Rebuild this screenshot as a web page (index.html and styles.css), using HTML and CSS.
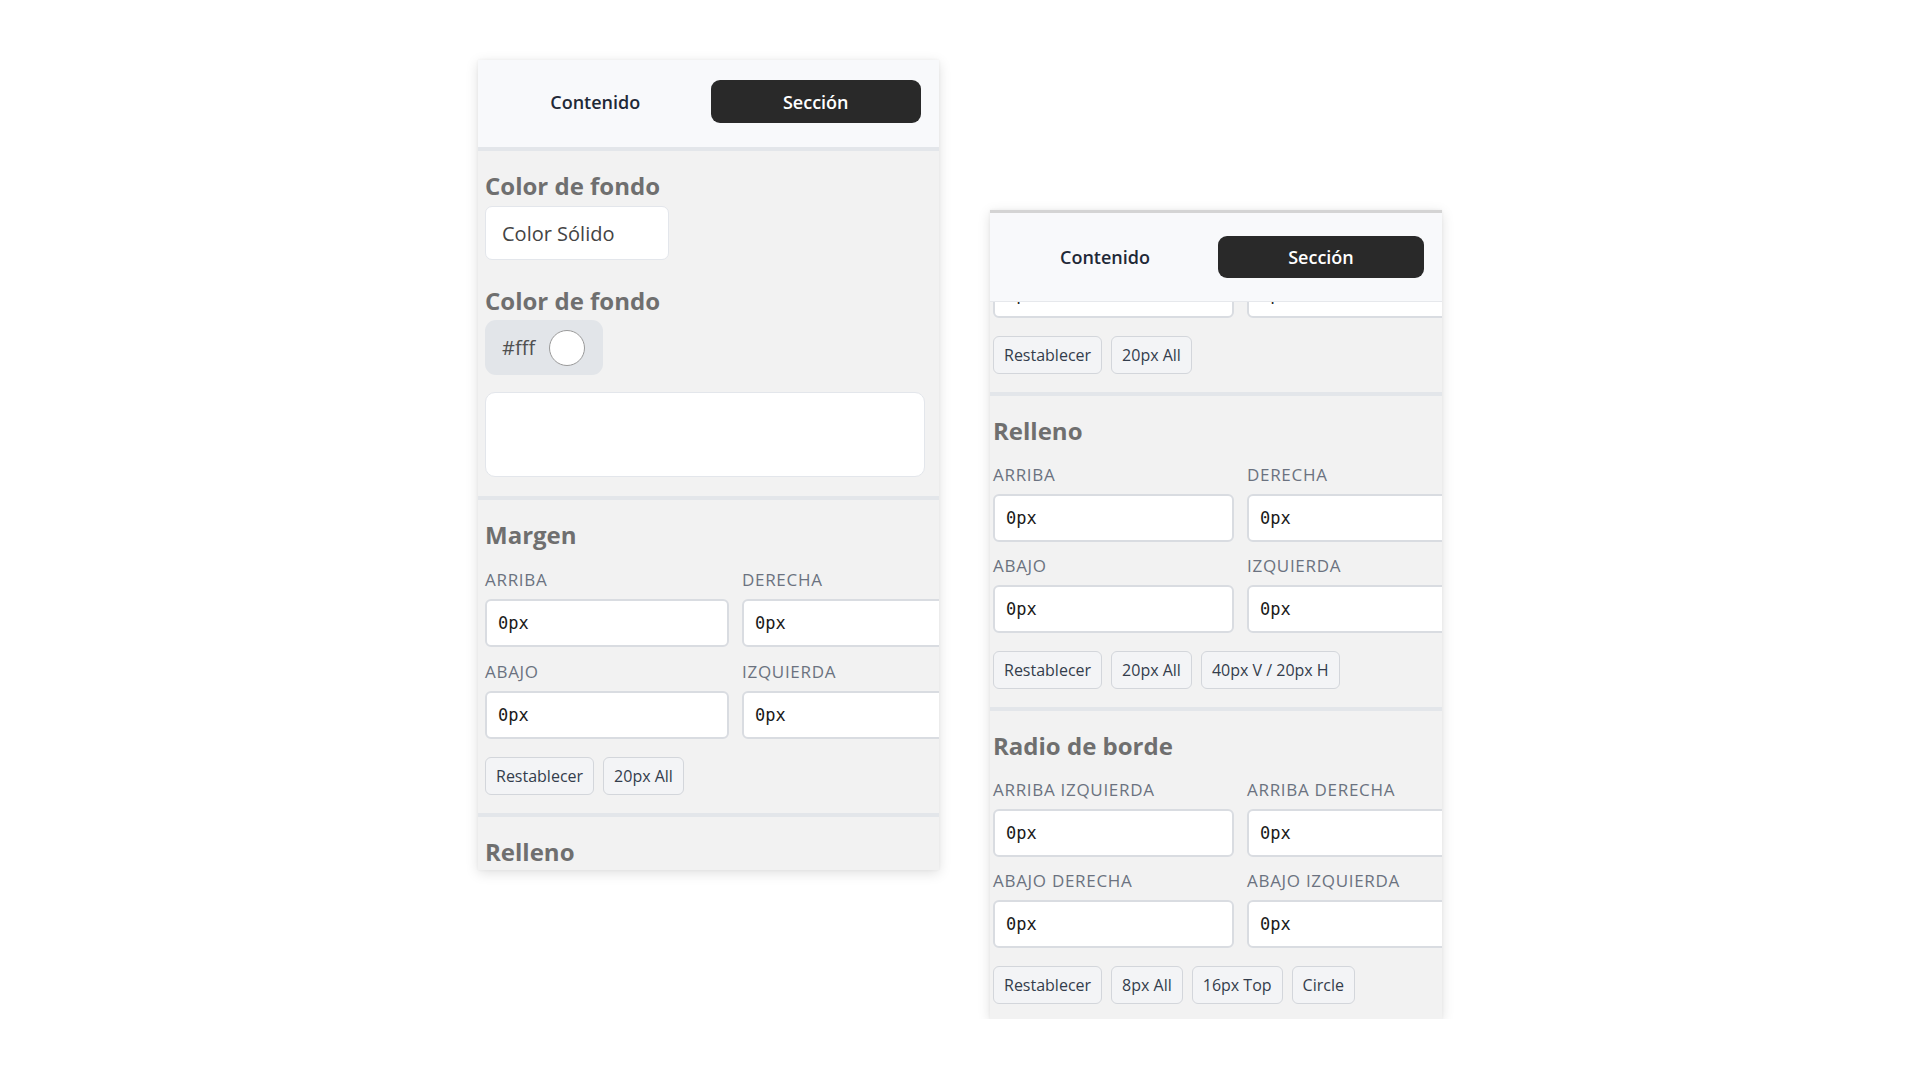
FILE: index.html
```html
<!DOCTYPE html>
<html lang="es">
<head>
<meta charset="utf-8">
<title>Editor de sección</title>
<link rel="stylesheet" href="styles.css">
</head>
<body>
<div class="stage">
  <div class="panel panel--a">
    <div class="tabs">
      <button class="tab">Contenido</button>
      <button class="tab tab--active">Sección</button>
    </div>
    <div class="body">
      <section class="section">
        <h3 class="section-title">Color de fondo</h3>
        <div class="select-box">Color Sólido</div>
        <h3 class="section-title section-title--spaced">Color de fondo</h3>
        <div class="color-chip"><span class="chip-text">#fff</span><span class="swatch"></span></div>
        <div class="preview-box"></div>
      </section>
      <section class="section">
        <h3 class="section-title">Margen</h3>
        <div class="grid">
          <div class="field"><label class="field-label">Arriba</label><div class="input">0px</div></div>
          <div class="field"><label class="field-label">Derecha</label><div class="input">0px</div></div>
          <div class="field"><label class="field-label">Abajo</label><div class="input">0px</div></div>
          <div class="field"><label class="field-label">Izquierda</label><div class="input">0px</div></div>
        </div>
        <div class="btn-row">
          <button class="btn">Restablecer</button>
          <button class="btn">20px All</button>
        </div>
      </section>
      <section class="section">
        <h3 class="section-title">Relleno</h3>
      </section>
    </div>
  </div>

  <div class="panel panel--b">
    <div class="tabs">
      <button class="tab">Contenido</button>
      <button class="tab tab--active">Sección</button>
    </div>
    <div class="body">
      <div class="scroll-content">
        <section class="section section--cut">
          <div class="grid grid--cut">
            <div class="input">0px</div>
            <div class="input">0px</div>
          </div>
          <div class="btn-row">
            <button class="btn">Restablecer</button>
            <button class="btn">20px All</button>
          </div>
        </section>
        <section class="section">
          <h3 class="section-title">Relleno</h3>
          <div class="grid">
            <div class="field"><label class="field-label">Arriba</label><div class="input">0px</div></div>
            <div class="field"><label class="field-label">Derecha</label><div class="input">0px</div></div>
            <div class="field"><label class="field-label">Abajo</label><div class="input">0px</div></div>
            <div class="field"><label class="field-label">Izquierda</label><div class="input">0px</div></div>
          </div>
          <div class="btn-row">
            <button class="btn">Restablecer</button>
            <button class="btn">20px All</button>
            <button class="btn">40px V / 20px H</button>
          </div>
        </section>
        <section class="section">
          <h3 class="section-title">Radio de borde</h3>
          <div class="grid">
            <div class="field"><label class="field-label">Arriba izquierda</label><div class="input">0px</div></div>
            <div class="field"><label class="field-label">Arriba derecha</label><div class="input">0px</div></div>
            <div class="field"><label class="field-label">Abajo derecha</label><div class="input">0px</div></div>
            <div class="field"><label class="field-label">Abajo izquierda</label><div class="input">0px</div></div>
          </div>
          <div class="btn-row">
            <button class="btn">Restablecer</button>
            <button class="btn">8px All</button>
            <button class="btn">16px Top</button>
            <button class="btn">Circle</button>
          </div>
        </section>
      </div>
    </div>
  </div>
</div>
</body>
</html>
```

FILE: styles.css
```css
* { box-sizing: border-box; }

html, body {
  margin: 0;
  padding: 0;
  background: #ffffff;
}

body {
  font-family: "Open Sans", "Noto Sans", sans-serif;
  color: #1f2937;
}

.stage {
  display: flex;
  align-items: flex-start;
  gap: 51px;
  padding: 60px 0 0 478px;
}

.panel {
  display: flex;
  flex-direction: column;
  background: #f2f2f2;
  overflow: hidden;
  box-shadow: 0 3px 12px rgba(0, 0, 0, 0.13), 0 0 3px rgba(0, 0, 0, 0.05);
}

.panel--a {
  width: 461px;
  height: 810px;
}

.panel--b {
  width: 452px;
  height: 809px;
  margin-top: 150px;
  border-top: 3px solid #d4d4d4;
}

/* Tabs header */
.tabs {
  display: grid;
  grid-template-columns: 1fr 1fr;
  column-gap: 10px;
  background: #f8f9fb;
  flex: none;
}

.panel--a .tabs {
  padding: 20px 18px 24px 12px;
  border-bottom: 4px solid #e3e6ea;
}

.panel--b .tabs {
  padding: 23px 18px 23px 12px;
  border-bottom: 1px solid #e6e8ec;
}

.tab {
  height: 43px;
  border: none;
  border-radius: 9px;
  background: transparent;
  font-family: "Open Sans", "Noto Sans", sans-serif;
  font-size: 18px;
  font-weight: 600;
  color: #1f2937;
  padding: 0;
  cursor: pointer;
}

.panel--b .tab { height: 42px; }

.tab--active {
  background: #292929;
  color: #ffffff;
}

/* Body */
.body {
  flex: 1;
  overflow: hidden;
}

.scroll-content {
  margin-top: -32px;
}

.section {
  padding: 21px 0 18px 7px;
  border-bottom: 4px solid #e3e6ea;
}

.panel--b .section {
  padding-left: 3px;
}

.panel--b .section--cut {
  padding-top: 0;
}

.section-title {
  margin: 0;
  font-size: 24px;
  line-height: 28px;
  font-weight: 700;
  color: #6f6f6f;
}

.select-box {
  margin-top: 6px;
  width: 184px;
  height: 54px;
  display: flex;
  align-items: center;
  padding-left: 16px;
  background: #ffffff;
  border: 1px solid #e3e6eb;
  border-radius: 7px;
  font-size: 20px;
  color: #444444;
}

.section-title--spaced {
  margin-top: 27px;
}

.color-chip {
  margin-top: 5px;
  width: 118px;
  height: 55px;
  display: flex;
  align-items: center;
  gap: 14px;
  padding-left: 17px;
  background: #e2e5e9;
  border-radius: 11px;
}

.chip-text {
  font-size: 20px;
  color: #505050;
}

.swatch {
  width: 36px;
  height: 36px;
  border-radius: 50%;
  background: #ffffff;
  border: 1.5px solid #9a9a9a;
}

.preview-box {
  margin-top: 17px;
  width: 440px;
  height: 85px;
  background: #ffffff;
  border: 1px solid #e3e6eb;
  border-radius: 10px;
}

.panel--a .section:first-child {
  padding-bottom: 19px;
}

/* Grid of fields */
.grid {
  display: grid;
  grid-template-columns: 244px 244px;
  column-gap: 13px;
  row-gap: 15px;
  margin-top: 21px;
}

.panel--b .grid {
  grid-template-columns: 241px 241px;
  row-gap: 14px;
  margin-top: 20px;
}

.panel--b .grid--cut {
  margin-top: 0;
}

.field {
  display: flex;
  flex-direction: column;
}

.field-label {
  display: block;
  height: 20px;
  font-size: 17px;
  line-height: 20px;
  font-weight: 500;
  letter-spacing: 0.7px;
  text-transform: uppercase;
  color: #6b7280;
  margin-bottom: 9px;
  white-space: nowrap;
}

.input {
  height: 48px;
  display: flex;
  align-items: center;
  padding-left: 11px;
  background: #ffffff;
  border: 2px solid #d9dce1;
  border-radius: 6px;
  font-family: "DejaVu Sans Mono", "Liberation Mono", monospace;
  font-size: 17px;
  color: #1a1a1a;
}

/* Buttons */
.btn-row {
  display: flex;
  gap: 9px;
  margin-top: 18px;
}

.btn {
  height: 38px;
  padding: 0 10px;
  background: #f3f4f6;
  border: 1px solid #d3d6db;
  border-radius: 6px;
  font-family: "Open Sans", "Noto Sans", sans-serif;
  font-size: 16px;
  color: #333d4c;
  cursor: pointer;
}
```
